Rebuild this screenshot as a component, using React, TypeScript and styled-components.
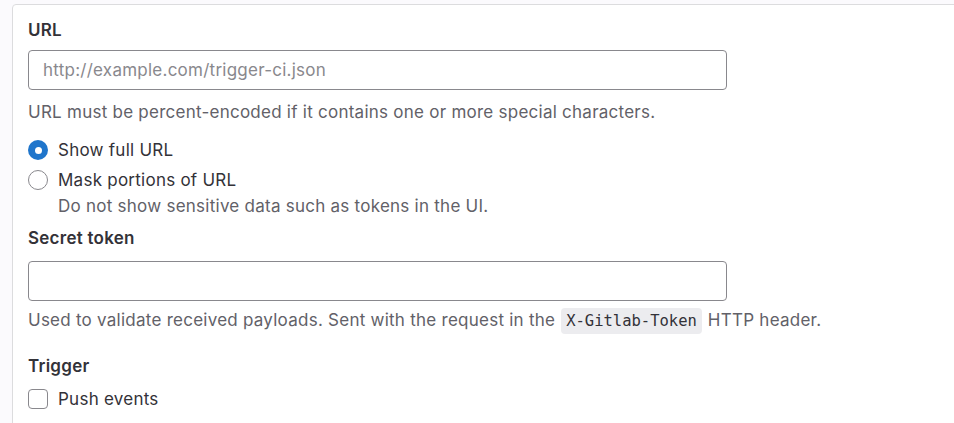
import React from "react";
import styled, { createGlobalStyle } from "styled-components";

const Global = createGlobalStyle`
  html, body { margin: 0; padding: 0; }
  body {
    background: #fbfafd;
    font-family: Inter, "Noto Sans", "Liberation Sans", sans-serif;
    font-size: 17px;
    letter-spacing: 0.25px;
    color: #333238;
    overflow: hidden;
  }
  * { box-sizing: border-box; }
`;

const Card = styled.div`
  margin: 4px -60px 0 12px;
  min-height: 520px;
  background: #ffffff;
  border: 1px solid #dcdcde;
  border-radius: 4px;
  padding: 13px 15px 0 15px;
  display: flex;
  flex-direction: column;
`;

const Group = styled.div<{ $mt?: number }>`
  display: flex;
  flex-direction: column;
  margin-top: ${(p) => p.$mt ?? 0}px;
`;

const Label = styled.label<{ $mb?: number }>`
  font-weight: 600;
  font-size: 17px;
  line-height: 24px;
  color: #333238;
  margin-bottom: ${(p) => p.$mb ?? 8}px;
`;

const Input = styled.input`
  width: 699px;
  height: 40px;
  border: 1px solid #89888d;
  border-radius: 4px;
  padding: 0 14px;
  font-family: inherit;
  font-size: 17px;
  letter-spacing: 0.25px;
  color: #333238;
  background: #fff;
  outline: none;
  &::placeholder { color: #89888d; }
`;

const Help = styled.p<{ $mt?: number }>`
  margin: ${(p) => p.$mt ?? 8}px 0 0;
  height: 24px;
  font-size: 17px;
  line-height: 24px;
  color: #626168;
  display: flex;
  align-items: center;
  white-space: nowrap;
`;

const Code = styled.code`
  font-family: "DejaVu Sans Mono", "Liberation Mono", monospace;
  font-size: 15.5px;
  letter-spacing: 0;
  line-height: 26px;
  height: 26px;
  background: #ececef;
  color: #333238;
  border-radius: 4px;
  padding: 0 5px;
  margin: 1px 6px 0;
`;

const OptionRow = styled.label<{ $mt?: number }>`
  display: flex;
  align-items: flex-start;
  gap: 10px;
  margin-top: ${(p) => p.$mt ?? 0}px;
  line-height: 24px;
  font-size: 17px;
  color: #333238;
`;

const RadioDot = styled.span<{ $checked?: boolean }>`
  width: 20px;
  height: 20px;
  margin-top: 2px;
  border-radius: 50%;
  flex: none;
  background: ${(p) => (p.$checked ? "#1f75cb" : "#fff")};
  border: ${(p) => (p.$checked ? "none" : "1px solid #89888d")};
  display: flex;
  align-items: center;
  justify-content: center;
  &::after {
    content: "";
    display: ${(p) => (p.$checked ? "block" : "none")};
    width: 7px;
    height: 7px;
    border-radius: 50%;
    background: #fff;
  }
`;

const CheckBox = styled.span`
  width: 20px;
  height: 20px;
  margin-top: 2px;
  flex: none;
  border-radius: 4px;
  border: 1px solid #89888d;
  background: #fff;
`;

const OptionText = styled.span`
  display: flex;
  flex-direction: column;
`;

const OptionDesc = styled.span`
  color: #626168;
  margin-top: 2px;
`;

export default function App() {
  return (
    <>
      <Global />
      <Card>
        <Group>
          <Label>URL</Label>
          <Input placeholder="http://example.com/trigger-ci.json" />
          <Help $mt={10}>URL must be percent-encoded if it contains one or more special characters.</Help>
        </Group>
        <Group $mt={14}>
          <OptionRow>
            <RadioDot $checked />
            <OptionText>Show full URL</OptionText>
          </OptionRow>
          <OptionRow $mt={6}>
            <RadioDot />
            <OptionText>
              Mask portions of URL
              <OptionDesc>Do not show sensitive data such as tokens in the UI.</OptionDesc>
            </OptionText>
          </OptionRow>
        </Group>
        <Group $mt={8}>
          <Label $mb={11}>Secret token</Label>
          <Input />
          <Help $mt={7}>
            Used to validate received payloads. Sent with the request in the<Code>X-Gitlab-Token</Code>HTTP header.
          </Help>
        </Group>
        <Group $mt={22}>
          <Label $mb={9}>Trigger</Label>
          <OptionRow>
            <CheckBox />
            <OptionText>Push events</OptionText>
          </OptionRow>
        </Group>
      </Card>
    </>
  );
}
